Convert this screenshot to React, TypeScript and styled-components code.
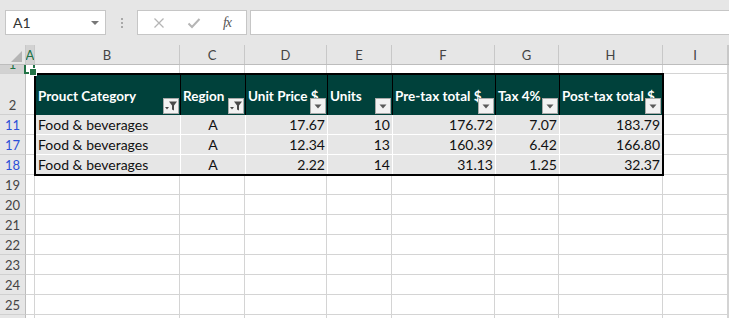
import React from 'react';
import styled, { createGlobalStyle } from 'styled-components';

const GlobalStyle = createGlobalStyle`
  html, body {
    margin: 0;
    padding: 0;
    background: #ffffff;
  }
  * {
    box-sizing: border-box;
  }
`

const COLS = [26, 9, 145, 65, 82, 65, 103, 64, 104, 65];
const gridCols = COLS.map((w) => `${w}px`).join(' ') + ' 1fr';
const LETTERS = ['A', 'B', 'C', 'D', 'E', 'F', 'G', 'H', 'I', ''];
const GREEN = '#217346';
const GRID = '#d4d4d4';

const Window = styled.div`
  width: 729px;
  height: 318px;
  overflow: hidden;
  display: flex;
  flex-direction: column;
  font-family: Lato, "Liberation Sans", Arial, sans-serif;
  background: #ffffff;
`

const Toolbar = styled.div`
  height: 45px;
  flex: none;
  background: #e6e6e6;
  display: flex;
  align-items: flex-start;
  padding: 10px 0 0 5px;
`

const NameBox = styled.div`
  width: 101px;
  height: 25px;
  background: #ffffff;
  border: 1px solid #c6c6c6;
  display: flex;
  align-items: center;
  justify-content: space-between;
  padding: 0 6px 0 7px;
  font-size: 14px;
  color: #333;
`

const Caret = styled.span`
  width: 0;
  height: 0;
  border-left: 4px solid transparent;
  border-right: 4px solid transparent;
  border-top: 4px solid #777;
`

const Grip = styled.div`
  width: 31px;
  height: 25px;
  display: flex;
  flex-direction: column;
  align-items: center;
  justify-content: center;
  gap: 2px;
  & > i {
    width: 2px;
    height: 2px;
    background: #a8a8a8;
  }
`

const FxBox = styled.div`
  width: 110px;
  height: 25px;
  background: #ffffff;
  border: 1px solid #c6c6c6;
  display: flex;
  align-items: center;
  justify-content: space-around;
  padding: 0 4px;
`

const FxLabel = styled.span`
  font-family: "Liberation Serif", "DejaVu Serif", serif;
  font-style: italic;
  font-size: 14px;
  color: #555;
  letter-spacing: -1px;
`

const FormulaInput = styled.div`
  flex: 1;
  height: 25px;
  margin-left: 3px;
  background: #ffffff;
  border: 1px solid #c6c6c6;
  border-right: none;
`

const HeaderBar = styled.div`
  height: 20px;
  flex: none;
  display: grid;
  grid-template-columns: ${gridCols};
  background: #e6e6e6;
  border-bottom: 1px solid #bdbdbd;
`

const ColLetter = styled.div<{ $active?: boolean }>`
  display: flex;
  align-items: center;
  justify-content: center;
  font-size: 13px;
  color: ${(p) => (p.$active ? GREEN : '#444')};
  background: ${(p) => (p.$active ? '#d2d2d2' : 'transparent')};
  border-right: 1px solid #c8c8c8;
  overflow: hidden;
`

const Corner = styled.div`
  border-right: 1px solid #c8c8c8;
  display: flex;
  align-items: flex-end;
  justify-content: flex-end;
  padding: 0 3px 2px 0;
`

const Body = styled.div`
  flex: 1;
  display: grid;
  grid-template-columns: ${gridCols};
  grid-template-rows: 9px 41px repeat(3, 20px) repeat(8, 20px);
  overflow: hidden;
`

const RowNum = styled.div<{ $color: string; $active?: boolean }>`
  display: flex;
  align-items: flex-end;
  justify-content: center;
  padding-bottom: 1px;
  font-size: 13px;
  line-height: 15px;
  color: ${(p) => p.$color};
  background: ${(p) => (p.$active ? '#d2d2d2' : '#e6e6e6')};
  border-right: 1px solid #bdbdbd;
  border-bottom: 1px solid #d0d0d0;
  overflow: hidden;
`

const Cell = styled.div`
  position: relative;
  border-right: 1px solid ${GRID};
  border-bottom: 1px solid ${GRID};
`

const Selection = styled.div`
  position: absolute;
  top: -2px;
  left: -2px;
  right: -1px;
  bottom: -1px;
  border: 2px solid ${GREEN};
  z-index: 2;
  &::after {
    content: '';
    position: absolute;
    right: -4px;
    bottom: -4px;
    width: 6px;
    height: 6px;
    background: ${GREEN};
    border: 1px solid #ffffff;
  }
`

const Table = styled.div`
  grid-column: 3 / 10;
  grid-row: 2 / 6;
  margin: -1px;
  border: 2px solid #000000;
  display: grid;
  grid-template-columns: 145px 65px 82px 65px 103px 64px 1fr;
  grid-template-rows: 40px 20px 20px 1fr;
  z-index: 1;
`

const HeadCell = styled.div<{ $last?: boolean }>`
  position: relative;
  background: #00413b;
  color: #ffffff;
  font-weight: 700;
  font-size: 13.5px;
  white-space: nowrap;
  overflow: hidden;
  display: flex;
  align-items: center;
  padding: 2px 0 0 2px;
  border-right: ${(p) => (p.$last ? 'none' : '1px solid #000')};
`

const FilterButton = styled.div`
  position: absolute;
  right: 1px;
  bottom: 1px;
  width: 16px;
  height: 16px;
  background: #f2f2f2;
  border: 1px solid #a9a9a9;
  display: flex;
  align-items: center;
  justify-content: center;
`

const DataCell = styled.div<{ $align: string; $lastCol?: boolean; $lastRow?: boolean }>`
  background: #e6e6e6;
  font-size: 14px;
  color: #111;
  display: flex;
  align-items: flex-end;
  justify-content: ${(p) => p.$align};
  padding: 0 2px 1px 2px;
  white-space: nowrap;
  overflow: hidden;
  border-right: ${(p) => (p.$lastCol ? 'none' : '1px solid #ffffff')};
  border-bottom: ${(p) => (p.$lastRow ? 'none' : '1px solid #ffffff')};
`

const headers = [
  { label: 'Prouct Category', filtered: true },
  { label: 'Region', filtered: true },
  { label: 'Unit Price $', filtered: false },
  { label: 'Units', filtered: false },
  { label: 'Pre-tax total $', filtered: false },
  { label: 'Tax 4%', filtered: false },
  { label: 'Post-tax total $', filtered: false },
];

const data = [
  ['Food & beverages', 'A', '17.67', '10', '176.72', '7.07', '183.79'],
  ['Food & beverages', 'A', '12.34', '13', '160.39', '6.42', '166.80'],
  ['Food & beverages', 'A', '2.22', '14', '31.13', '1.25', '32.37'],
];

const rows = [
  { n: '1', color: GREEN, active: true },
  { n: '2', color: '#444' },
  { n: '11', color: '#2b4fd8' },
  { n: '17', color: '#2b4fd8' },
  { n: '18', color: '#2b4fd8' },
  ...['19', '20', '21', '22', '23', '24', '25', '26'].map((n) => ({ n, color: '#444' })),
];

const Arrow = () => (
  <svg width="8" height="5" viewBox="0 0 8 5">
    <path d="M0.5 0.5 L7.5 0.5 L4 4.5 Z" fill="#5a5a5a" />
  </svg>
);

const Funnel = () => (
  <svg width="14" height="12" viewBox="0 0 14 12">
    <path d="M5 1.5 L13 1.5 L10 5.5 L10 10.5 L8 9.5 L8 5.5 Z" fill="#4a4a4a" />
    <path d="M1 7 L5 7 L3 9.5 Z" fill="#4a4a4a" />
  </svg>
);

const App: React.FC = () => {
  const alignFor = (c: number) => (c === 0 ? 'flex-start' : c === 1 ? 'center' : 'flex-end');

  return (
    <>
      <GlobalStyle />
      <Window>
        <Toolbar>
          <NameBox>
            A1
            <Caret />
          </NameBox>
          <Grip>
            <i />
            <i />
            <i />
          </Grip>
          <FxBox>
            <svg width="12" height="12" viewBox="0 0 12 12">
              <path d="M1.5 1.5 L10.5 10.5 M10.5 1.5 L1.5 10.5" stroke="#b5b5b5" strokeWidth="1.3" />
            </svg>
            <svg width="14" height="12" viewBox="0 0 14 12">
              <path d="M1.5 6.5 L5 10 L12.5 2" stroke="#b5b5b5" strokeWidth="2" fill="none" />
            </svg>
            <FxLabel>fx</FxLabel>
          </FxBox>
          <FormulaInput />
        </Toolbar>

        <HeaderBar>
          <Corner>
            <svg width="11" height="11" viewBox="0 0 11 11">
              <path d="M11 0 L11 11 L0 11 Z" fill="#b5b5b5" />
            </svg>
          </Corner>
          {LETTERS.map((l, i) => (
            <ColLetter key={i} $active={l === 'A'}>
              {l}
            </ColLetter>
          ))}
        </HeaderBar>

        <Body>
          <Table>
            {headers.map((h, i) => (
              <HeadCell key={h.label} $last={i === headers.length - 1}>
                {h.label}
                <FilterButton>{h.filtered ? <Funnel /> : <Arrow />}</FilterButton>
              </HeadCell>
            ))}
            {data.map((r, ri) =>
              r.map((v, ci) => (
                <DataCell
                  key={`${ri}-${ci}`}
                  $align={alignFor(ci)}
                  $lastCol={ci === r.length - 1}
                  $lastRow={ri === data.length - 1}
                >
                  {v}
                </DataCell>
              ))
            )}
          </Table>

          {rows.map((row, ri) => {
            const inTable = ri >= 1 && ri <= 4;
            return (
              <React.Fragment key={row.n}>
                <RowNum $color={row.color} $active={row.active}>
                  {row.n}
                </RowNum>
                {LETTERS.map((l, ci) => {
                  if (inTable && ci >= 1 && ci <= 7) return null;
                  return (
                    <Cell key={ci}>{ri === 0 && ci === 0 ? <Selection /> : null}</Cell>
                  );
                })}
              </React.Fragment>
            );
          })}
        </Body>
      </Window>
    </>
  );
};

export default App;
